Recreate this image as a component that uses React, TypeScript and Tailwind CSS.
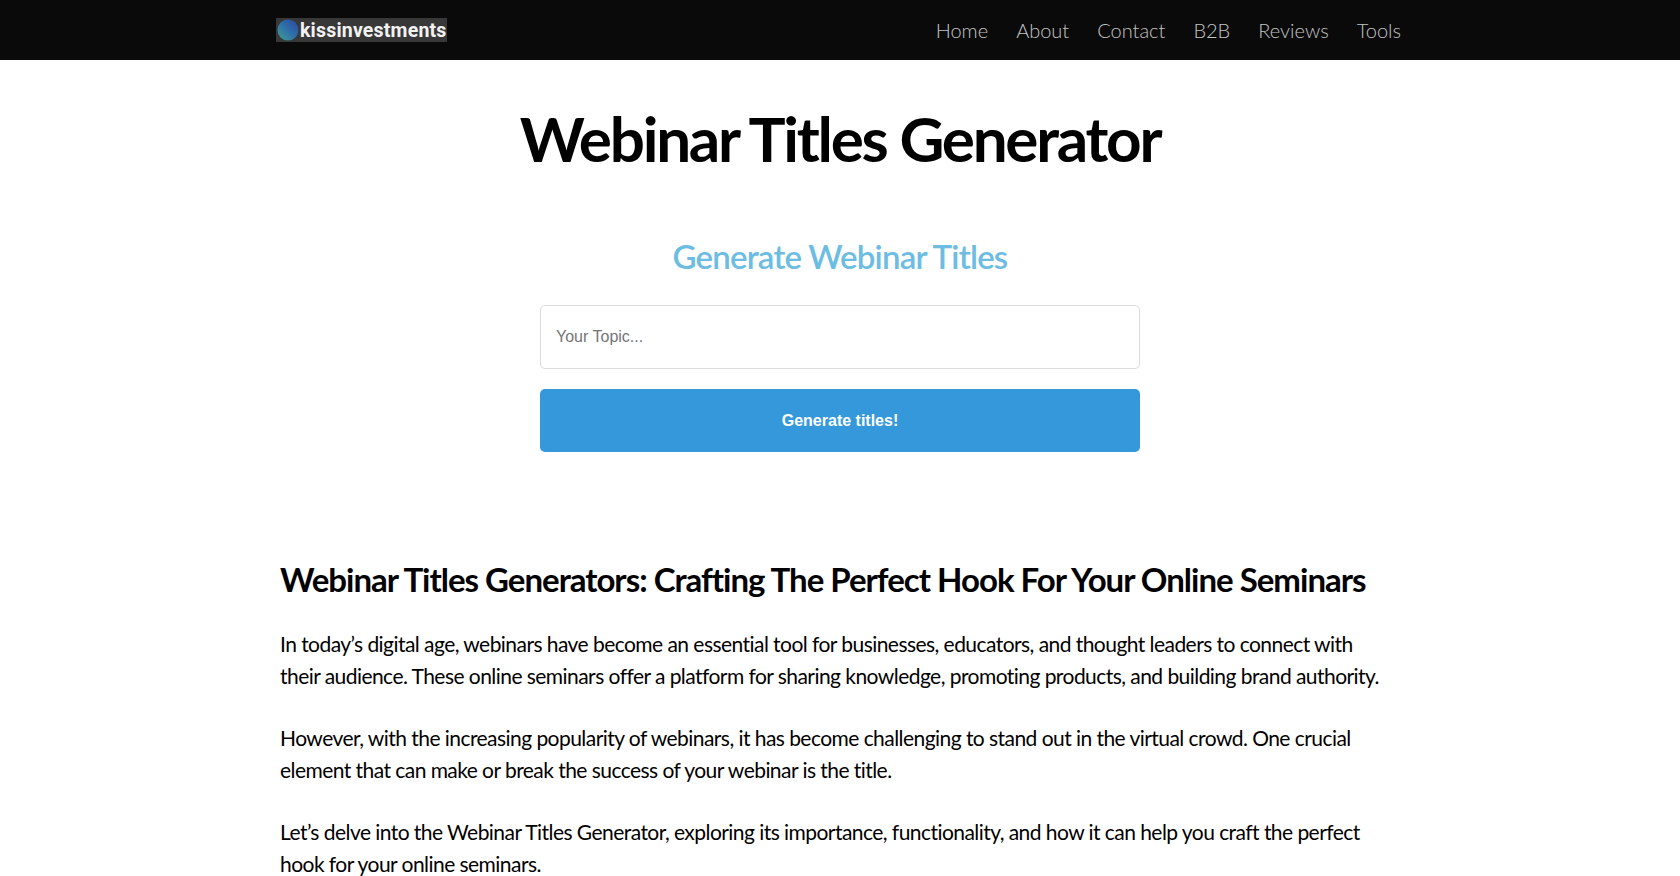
const navLinks = ['Home', 'About', 'Contact', 'B2B', 'Reviews', 'Tools'];

const paragraphs = [
  'In today’s digital age, webinars have become an essential tool for businesses, educators, and thought leaders to connect with their audience. These online seminars offer a platform for sharing knowledge, promoting products, and building brand authority.',
  'However, with the increasing popularity of webinars, it has become challenging to stand out in the virtual crowd. One crucial element that can make or break the success of your webinar is the title.',
  'Let’s delve into the Webinar Titles Generator, exploring its importance, functionality, and how it can help you craft the perfect hook for your online seminars.',
];

const Logo = () => (
  <div className="flex h-[24px] w-[171px] items-center bg-[#383838] pl-[1px]">
    <svg width="22" height="22" viewBox="0 0 22 22" className="shrink-0">
      <defs>
        <linearGradient id="globe" x1="0" y1="1" x2="1" y2="0">
          <stop offset="0" stopColor="#3fa08f" />
          <stop offset="0.5" stopColor="#2f6fa8" />
          <stop offset="1" stopColor="#2a45a0" />
        </linearGradient>
      </defs>
      <circle cx="11" cy="11" r="10.5" fill="url(#globe)" />
    </svg>
    <span className="mt-[1px] ml-[1px] font-['Roboto',sans-serif] text-[19.5px] leading-[24px] font-bold tracking-[0.2px] text-[#f2f2f2]">
      kissinvestments
    </span>
  </div>
);

export default function App() {
  return (
    <div className="h-[876px] overflow-hidden bg-white font-['Lato',sans-serif] text-black">
      {/* top bar */}
      <header className="h-[60px] bg-[#0a0a0a]">
        <div className="mx-auto flex h-full w-[1128px] items-center justify-between pr-[3px]">
          <Logo />
          <nav className="flex gap-[28px] text-[20px] font-light text-[#c4c4c4]">
            {navLinks.map((link) => (
              <a key={link} href="#">{link}</a>
            ))}
          </nav>
        </div>
      </header>

      <main className="mx-auto w-[1120px]">
        <h1 className="mt-[38px] text-center text-[62px] leading-[80px] font-bold tracking-[-2.25px]">
          Webinar Titles Generator
        </h1>

        {/* generator form */}
        <section className="mx-auto mt-[57px] flex w-[600px] flex-col">
          <h2 className="text-center text-[33px] leading-[42px] font-semibold tracking-[-0.8px] text-[#6dbde3]">
            Generate Webinar Titles
          </h2>
          <input
            placeholder="Your Topic..."
            className="mt-[28px] h-[64px] rounded-[5px] border border-[#dcdcdc] px-[15px] font-['Liberation_Sans',sans-serif] text-[16px] outline-none placeholder:text-[#757575]"
          />
          <button className="mt-[20px] h-[63px] rounded-[5px] bg-[#3498db] font-['Liberation_Sans',sans-serif] text-[16px] font-bold text-white">
            Generate titles!
          </button>
        </section>

        {/* article */}
        <article className="mt-[104px]">
          <h2 className="text-[33px] leading-[46px] font-bold tracking-[-1px] whitespace-nowrap">
            Webinar Titles Generators: Crafting The Perfect Hook For Your Online Seminars
          </h2>
          <div className="mt-[26px] flex w-[1110px] flex-col gap-[30px] text-[21px] leading-[32px] tracking-[-0.55px]">
            {paragraphs.map((text) => (
              <p key={text}>{text}</p>
            ))}
          </div>
        </article>
      </main>
    </div>
  );
}
